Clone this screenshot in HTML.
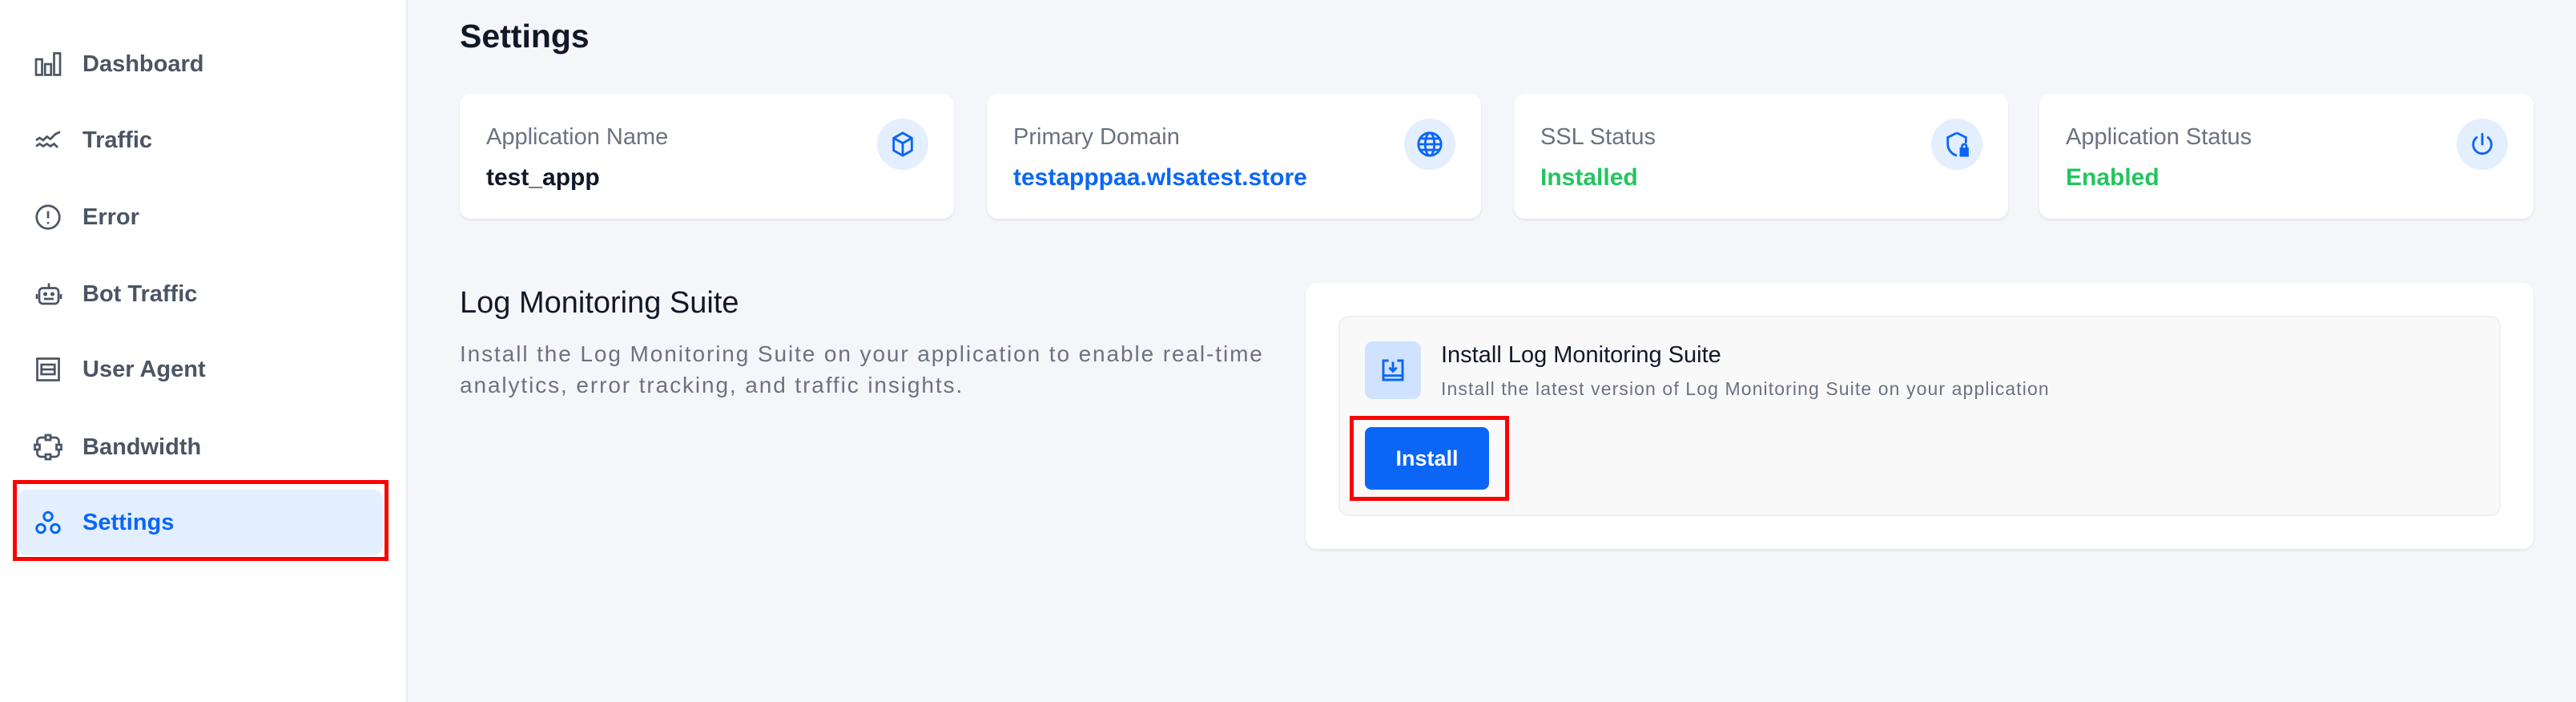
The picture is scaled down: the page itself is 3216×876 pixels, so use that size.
<!DOCTYPE html>
<html><head><meta charset="utf-8"><style>
*{box-sizing:border-box;margin:0;padding:0}
body{width:3216px;height:876px;background:#f5f6fa;font-family:"Liberation Sans",sans-serif;position:relative;overflow:hidden;color:#111827}
.abs{position:absolute}
.side{left:0;top:0;width:509px;height:876px;background:#fff;border-right:2px solid #eceef3}
.item{position:absolute;left:22px;width:456px;height:82px;display:flex;align-items:center;font-size:29px;color:#4b5563;font-weight:600}
.item svg{position:absolute;left:20px}
.item span{position:absolute;left:81px}
.card{background:#fff;border-radius:14px;box-shadow:0 2px 3px rgba(0,0,0,.08);position:absolute;top:117px;width:617px;height:156px}
.lbl{position:absolute;left:33px;top:38px;font-size:29px;color:#6b7280}
.val{position:absolute;left:33px;top:88px;font-size:30px;font-weight:600}
.ic{position:absolute;right:32px;top:31px;width:64px;height:64px;border-radius:50%;background:#e3efff;display:flex;align-items:center;justify-content:center}
</style></head><body>
<div class="abs side">
 <div class="item" style="top:39px"><svg width="36" height="36" viewBox="0 0 24 24" fill="none" stroke="#4b5563" stroke-width="1.8"><rect x="2" y="8" width="5" height="13"/><rect x="9.5" y="12" width="5" height="9"/><rect x="17" y="3" width="5" height="18"/></svg><span>Dashboard</span></div>
 <div class="item" style="top:134px"><svg width="36" height="36" viewBox="0 0 24 24" fill="none" stroke="#4b5563" stroke-width="1.8"><path d="M2 12l3-2 3 2 3-3 3 2 4-4 4-2M2 17l3-2 3 2 3-2 3 2 3-2 3 3"/></svg><span>Traffic</span></div>
 <div class="item" style="top:230px"><svg width="36" height="36" viewBox="0 0 24 24" fill="none" stroke="#4b5563" stroke-width="1.8"><circle cx="12" cy="12" r="9.5"/><path d="M12 7v6M12 16v1.5"/></svg><span>Error</span></div>
 <div class="item" style="top:326px"><svg width="38" height="36" viewBox="0 0 24 24" fill="none" stroke="#4b5563" stroke-width="1.8"><rect x="4" y="7" width="16" height="13" rx="3"/><path d="M12 7V3M2 12v4M22 12v4M8 16h8"/><circle cx="9" cy="12" r=".8"/><circle cx="15" cy="12" r=".8"/></svg><span>Bot Traffic</span></div>
 <div class="item" style="top:420px"><svg width="36" height="36" viewBox="0 0 24 24" fill="none" stroke="#4b5563" stroke-width="1.8"><rect x="3" y="3" width="18" height="18"/><rect x="6.5" y="8" width="11" height="8"/><path d="M6.5 12h11"/></svg><span>User Agent</span></div>
 <div class="item" style="top:517px"><svg width="36" height="36" viewBox="0 0 24 24" fill="none" stroke="#4b5563" stroke-width="1.8"><path d="M10 4H6a3 3 0 0 0-3 3v3M14 4h4a3 3 0 0 1 3 3v3M3 14v3a3 3 0 0 0 3 3h4M21 14v3a3 3 0 0 1-3 3h-4"/><rect x="10" y="2" width="4" height="4"/><rect x="10" y="18" width="4" height="4"/><rect x="1" y="10" width="4" height="4"/><rect x="19" y="10" width="4" height="4"/></svg><span>Bandwidth</span></div>
 <div class="item" style="top:611px;background:#e3efff;border-radius:12px;color:#0b66f5"><svg width="36" height="36" viewBox="0 0 24 24" fill="none" stroke="#0b66f5" stroke-width="2"><circle cx="12" cy="7" r="3.5"/><circle cx="6" cy="17" r="3.5"/><circle cx="18" cy="17" r="3.5"/></svg><span>Settings</span></div>
 <div class="abs" style="left:16px;top:599px;width:469px;height:101px;border:5px solid #f00"></div>
</div>

<div class="abs" style="left:574px;top:22px;font-size:41px;font-weight:600;color:#111827">Settings</div>

<div class="card" style="left:574px"><div class="lbl">Application Name</div><div class="val">test_appp</div>
<div class="ic"><svg width="34" height="34" viewBox="0 0 24 24" fill="none" stroke="#0b66f5" stroke-width="2" stroke-linejoin="round"><path d="M12 2l8 4.5v11L12 22l-8-4.5v-11z"/><path d="M4 6.5L12 11l8-4.5M12 11v11"/></svg></div></div>
<div class="card" style="left:1232px"><div class="lbl">Primary Domain</div><div class="val" style="color:#0b66f5">testapppaa.wlsatest.store</div>
<div class="ic"><svg width="34" height="34" viewBox="0 0 24 24" fill="none" stroke="#0b66f5" stroke-width="2"><circle cx="12" cy="12" r="10"/><ellipse cx="12" cy="12" rx="4" ry="10"/><path d="M2 12h20M3.5 7h17M3.5 17h17"/></svg></div></div>
<div class="card" style="left:1890px"><div class="lbl">SSL Status</div><div class="val" style="color:#22c55e">Installed</div>
<div class="ic"><svg width="34" height="34" viewBox="0 0 24 24" fill="none" stroke="#0b66f5" stroke-width="2"><path d="M12 2l8 4v5M12 2L4 6v6c0 5 4 9 8 10"/><rect x="15.5" y="16" width="6" height="6" fill="#0b66f5"/><path d="M16.5 16v-2a2 2 0 0 1 4 0v2"/></svg></div></div>
<div class="card" style="left:2546px;width:617px"><div class="lbl">Application Status</div><div class="val" style="color:#22c55e">Enabled</div>
<div class="ic"><svg width="34" height="34" viewBox="0 0 24 24" fill="none" stroke="#0b66f5" stroke-width="2" stroke-linecap="round"><path d="M12 3v9"/><path d="M7 6a8 8 0 1 0 10 0"/></svg></div></div>

<div class="abs" style="left:574px;top:357px;font-size:38px;font-weight:500;color:#111827">Log Monitoring Suite</div>
<div class="abs" style="left:574px;top:422px;font-size:28px;letter-spacing:1.9px;line-height:39px;color:#6b7280;width:1100px">Install the Log Monitoring Suite on your application to enable real-time<br>analytics, error tracking, and traffic insights.</div>

<div class="abs" style="left:1630px;top:353px;width:1533px;height:332px;background:#fff;border-radius:14px;box-shadow:0 2px 3px rgba(0,0,0,.07)"></div>
<div class="abs" style="left:1671px;top:394px;width:1451px;height:250px;background:#f9f9fa;border:2px solid #eef0f3;border-radius:12px"></div>
<div class="abs" style="left:1704px;top:426px;width:70px;height:72px;background:#cfe2ff;border-radius:10px;display:flex;align-items:center;justify-content:center"><svg width="32" height="32" viewBox="0 0 24 24" fill="none" stroke="#0b66f5" stroke-width="2.2"><path d="M8 3H3v18h18V3h-5M3 17h18M12 4v9M8.5 9.5L12 13l3.5-3.5"/></svg></div>
<div class="abs" style="left:1799px;top:427px;font-size:29px;font-weight:500;color:#111827">Install Log Monitoring Suite</div>
<div class="abs" style="left:1799px;top:472px;font-size:23px;letter-spacing:1.1px;color:#6b7280">Install the latest version of Log Monitoring Suite on your application</div>
<div class="abs" style="left:1704px;top:533px;width:155px;height:78px;background:#0b66f5;border-radius:8px;color:#fff;font-size:27px;font-weight:600;display:flex;align-items:center;justify-content:center">Install</div>
<div class="abs" style="left:1685px;top:519px;width:199px;height:106px;border:5px solid #f00"></div>
</body></html>
